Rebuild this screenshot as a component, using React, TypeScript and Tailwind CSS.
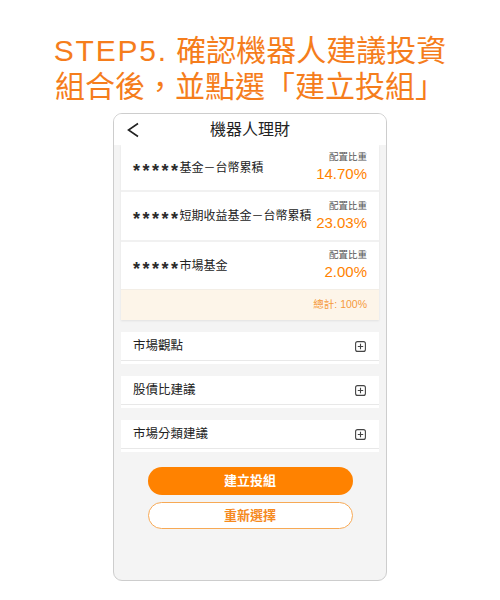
import React from 'react'

const cjk = { fontFamily: '"Liberation Sans", "Noto Sans CJK TC", sans-serif' }

const funds = [
  { name: '基金－台幣累積', pct: '14.70%', h: 'h-[45px]' },
  { name: '短期收益基金－台幣累積', pct: '23.03%', h: 'h-[50px]' },
  { name: '市場基金', pct: '2.00%', h: 'h-[49px]' },
]

const sections = ['市場觀點', '股債比建議', '市場分類建議']

const PlusBox = () => (
  <svg width="11" height="11" viewBox="0 0 11 11" fill="none" stroke="#444" strokeWidth="1.1">
    <rect x="0.6" y="0.6" width="9.8" height="9.8" rx="2" />
    <path d="M5.5 2.8v5.4M2.8 5.5h5.4" />
  </svg>
)

export default function App() {
  return (
    <div className="w-[500px] h-[600px] bg-white flex flex-col items-center" style={cjk}>
      <h1 className="mt-[33px] text-[30px] leading-[36px] text-center text-[#f57d1c] font-normal">
        <span className="tracking-[1.8px]">STEP5.</span> 確認機器人建議投資
        <br />
        組合後，並點選「建立投組」
      </h1>

      <div className="mt-[8px] w-[274px] h-[468px] border-[1.5px] border-[#cdcdcd] rounded-[9px] bg-[#f4f4f4] overflow-hidden flex flex-col">
        <div className="h-[31px] bg-white flex items-center relative shrink-0">
          <svg className="absolute left-[12px] top-[8px]" width="14" height="16" viewBox="0 0 14 16" fill="none" stroke="#222" strokeWidth="1.6">
            <path d="M12 1.5 2.5 8 12 14.5" />
          </svg>
          <div className="w-full text-center text-[16px] text-[#222]">機器人理財</div>
        </div>

        <div className="px-[7px] flex flex-col">
          <div className="bg-white shadow-[0_1px_2px_rgba(0,0,0,0.08)]">
            {funds.map((f, i) => (
              <div
                key={f.name}
                className={`${f.h} flex items-center justify-between pl-[12px] pr-[12px] ${i > 0 ? 'border-t-2 border-[#f1f1f1]' : ''}`}
              >
                <span className="flex items-center text-[12px] text-[#222]">
                  <span className="text-[18px] leading-[18px] font-bold tracking-[2.5px] -mr-[1px] translate-y-[3px] text-[#2a2a2a]">*****</span>
                  {f.name}
                </span>
                <div className="flex flex-col items-end">
                  <span className="text-[9.5px] leading-[13px] text-[#555]">配置比重</span>
                  <span className="text-[15px] leading-[22px] text-[#ff8200]">{f.pct}</span>
                </div>
              </div>
            ))}
            <div className="h-[31px] bg-[#fdf5e9] border-t border-[#f3eee6] flex items-center justify-end pr-[12px]">
              <span className="text-[10.5px] text-[#f59a3c]">總計: 100%</span>
            </div>
          </div>

          <div className="mt-[12px] flex flex-col gap-[12px]">
            {sections.map((s) => (
              <div key={s} className="bg-white">
                <div className="h-[29px] flex items-center justify-between pl-[12px] pr-[13px] border-b border-[#e8e8e8]">
                  <span className="text-[12.5px] text-[#222]">{s}</span>
                  <PlusBox />
                </div>
                <div className="h-[3px]" />
              </div>
            ))}
          </div>

          <div className="mt-[15px] flex flex-col items-center gap-[7px]">
            <button className="w-[205px] h-[28px] rounded-full bg-[#ff8200] text-white text-[13px] font-bold">
              建立投組
            </button>
            <button className="w-[205px] h-[27px] rounded-full bg-white border border-[#f7a955] text-[#f58a1f] text-[13px] font-bold">
              重新選擇
            </button>
          </div>
        </div>
      </div>
    </div>
  )
}
